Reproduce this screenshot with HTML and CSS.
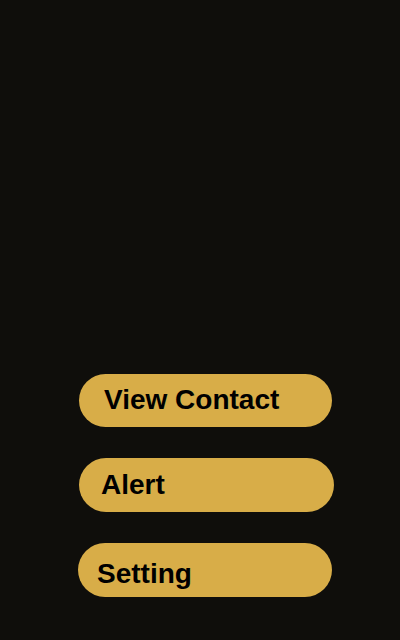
FILE: index.html
```html
<!DOCTYPE html>
<html lang="en">
<head>
<meta charset="utf-8">
<title>Menu</title>
<link rel="stylesheet" href="styles.css">
</head>
<body>
<main class="screen">
  <nav class="menu">
    <button class="pill pill-contact">View Contact</button>
    <button class="pill pill-alert">Alert</button>
    <button class="pill pill-setting">Setting</button>
  </nav>
</main>
</body>
</html>
```

FILE: styles.css
```css
html, body {
  margin: 0;
  padding: 0;
  background: #0f0e0b;
}

.screen {
  width: 400px;
  height: 640px;
  display: flex;
  flex-direction: column;
  justify-content: flex-end;
  box-sizing: border-box;
  padding-bottom: 43px;
}

.menu {
  display: flex;
  flex-direction: column;
  gap: 31px;
}

.pill {
  display: flex;
  align-items: center;
  box-sizing: border-box;
  height: 54px;
  border: none;
  border-radius: 27px;
  background: #d8ad48;
  color: #000;
  font-family: "Liberation Sans", Arial, sans-serif;
  font-weight: bold;
  font-size: 28px;
  line-height: normal;
  text-align: left;
  padding: 0;
  cursor: pointer;
}

.pill-contact {
  margin-left: 79px;
  width: 253px;
  height: 53px;
  padding-left: 25px;
  padding-bottom: 2px;
}

.pill-alert {
  margin-left: 79px;
  width: 255px;
  padding-left: 22px;
}

.pill-setting {
  margin-left: 78px;
  width: 254px;
  padding-left: 19px;
  padding-top: 8px;
}
```
